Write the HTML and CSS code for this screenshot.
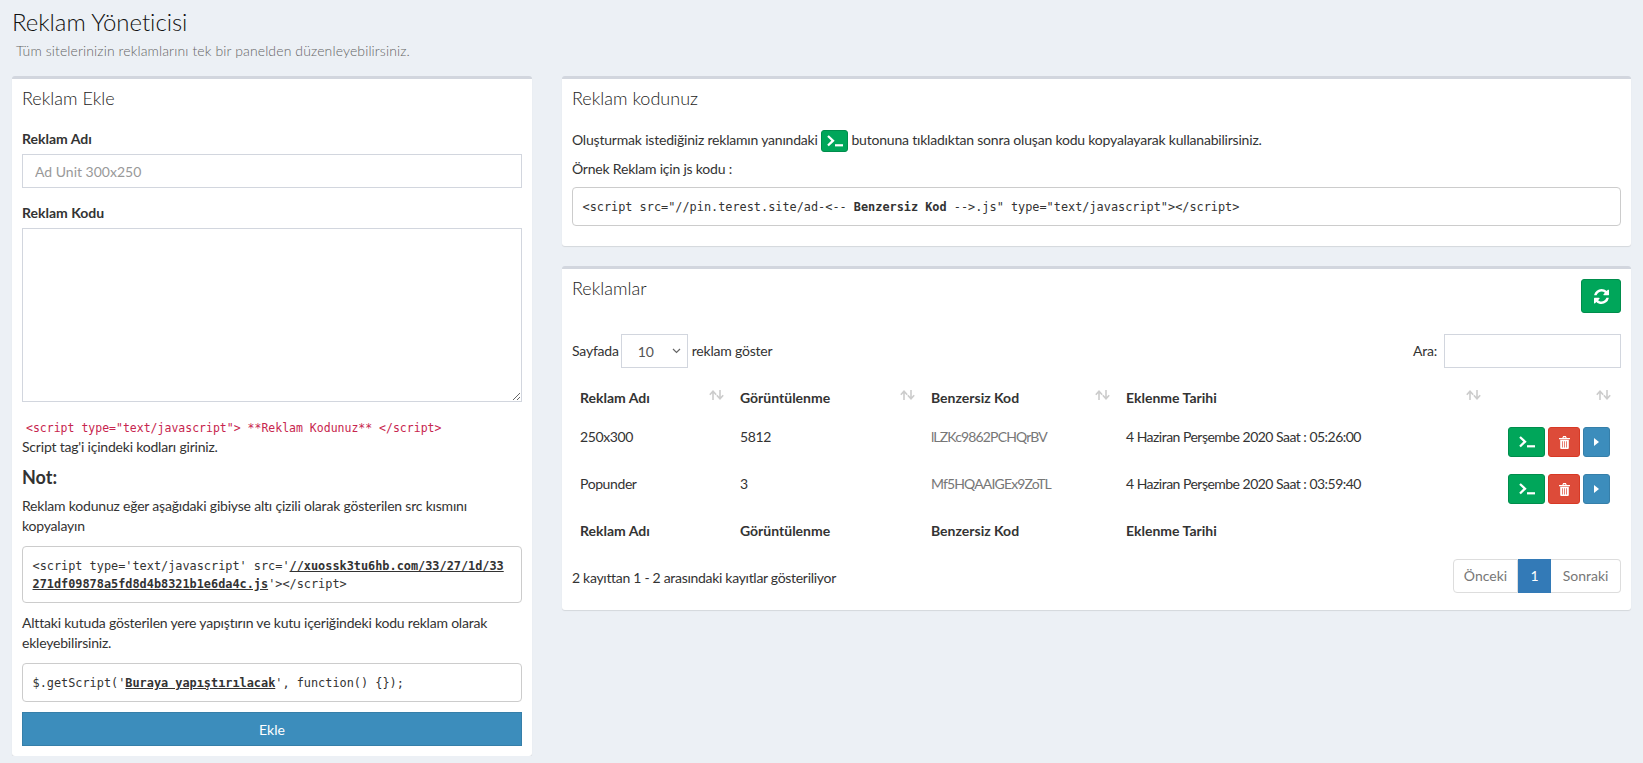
FILE: index.html
```html
<!DOCTYPE html>
<html lang="tr">
<head>
  <meta charset="UTF-8" />
  <meta name="viewport" content="width=device-width, initial-scale=1.0"/>
  <title>Reklam Yöneticisi</title>
  <link rel="stylesheet" href="styles.css">
</head>
<body>

  <svg class="icon-defs" width="0" height="0">
    <symbol id="i-term" viewBox="0 0 16 12">
      <path d="M1 1 6 5.700 1 10.500" fill="none" stroke="currentColor" stroke-width="2.300"/>
      <rect x="8" y="9.200" width="8" height="2.200" fill="currentColor"/>
    </symbol>
    <symbol id="i-trash" viewBox="0 0 11 13">
      <path d="M0 2h11v1.300H0zM3.300 2l.8-2h2.800l.8 2H6.500l-.3-.8H4.800L4.500 2z" fill="currentColor"/>
      <path d="M1.200 3.800h8.600V12a1 1 0 0 1-1 1H2.200a1 1 0 0 1-1-1zM3 5.200v6.300h.7V5.200zm2.150 0v6.300h.7V5.200zm2.150 0v6.300H8V5.200z" fill="currentColor" fill-rule="evenodd"/>
    </symbol>
    <symbol id="i-sort" viewBox="0 0 15 10">
      <path d="M4 10V2M.8 4.800 4 1.200l3.200 3.600" fill="none" stroke="currentColor" stroke-width="1.600"/>
      <path d="M11 0v8M7.800 5.200 11 8.800l3.200-3.600" fill="none" stroke="currentColor" stroke-width="1.600"/>
    </symbol>
  </svg>

  <header class="page-head">
    <h1>Reklam Yöneticisi</h1>
    <p class="subtitle">Tüm sitelerinizin reklamlarını tek bir panelden düzenleyebilirsiniz.</p>
  </header>

  <main class="content">
    <section class="box box-add">
      <h3 class="box-title">Reklam Ekle</h3>
      <form class="add-form">
        <label for="adName">Reklam Adı</label>
        <input type="text" id="adName" class="field" placeholder="Ad Unit 300x250">
        <label for="adCode" class="label-code">Reklam Kodu</label>
        <textarea id="adCode" class="field field-area"></textarea>
        <code class="hint-code">&lt;script type="text/javascript"&gt; **Reklam Kodunuz** &lt;/script&gt;</code>
        <p class="line">Script tag'i içindeki kodları giriniz.</p>
        <h4>Not:</h4>
        <p class="line">Reklam kodunuz eğer aşağıdaki gibiyse altı çizili olarak gösterilen src kısmını kopyalayın</p>
        <pre class="code-box">&lt;script type='text/javascript' src='<u>//xuossk3tu6hb.com/33/27/1d/33</u>
<u>271df09878a5fd8d4b8321b1e6da4c.js</u>'&gt;&lt;/script&gt;</pre>
        <p class="line">Alttaki kutuda gösterilen yere yapıştırın ve kutu içeriğindeki kodu reklam olarak ekleyebilirsiniz.</p>
        <pre class="code-box">$.getScript('<u>Buraya yapıştırılacak</u>', function() {});</pre>
        <button type="button" class="btn-submit">Ekle</button>
      </form>
    </section>

    <div class="right-col">
      <section class="box box-code">
        <h3 class="box-title">Reklam kodunuz</h3>
        <div class="code-body">
          <p class="line">Oluşturmak istediğiniz reklamın yanındaki <span class="btn btn-green btn-inline"><svg class="ic-term"><use href="#i-term"/></svg></span> butonuna tıkladıktan sonra oluşan kodu kopyalayarak kullanabilirsiniz.</p>
          <p class="line line-sample">Örnek Reklam için js kodu :</p>
          <pre class="code-box">&lt;script src="//pin.terest.site/ad-&lt;-- <b>Benzersiz Kod</b> --&gt;.js" type="text/javascript"&gt;&lt;/script&gt;</pre>
        </div>
      </section>

      <section class="box box-list">
        <div class="list-head">
          <h3 class="box-title">Reklamlar</h3>
          <button type="button" class="btn btn-green btn-refresh">
            <svg viewBox="0 0 1536 1536" class="ic-refresh"><path fill="currentColor" d="M1511 928q0 5-1 7-64 268-268 434.500t-478 166.500q-146 0-282.500-55t-243.500-157l-129 129q-19 19-45 19t-45-19-19-45v-448q0-26 19-45t45-19h448q26 0 45 19t19 45-19 45l-137 137q71 66 161 102t187 36q134 0 250-65t186-179q11-17 53-117 8-23 30-23h192q13 0 22.500 9.500t9.500 22.500zm25-800v448q0 26-19 45t-45 19h-448q-26 0-45-19t-19-45 19-45l138-138q-148-137-349-137-134 0-250 65t-186 179q-11 17-53 117-8 23-30 23h-199q-13 0-22.500-9.500t-9.500-22.500v-7q65-268 270-434.500t480-166.500q146 0 284 55.500t245 156.500l130-129q19-19 45-19t45 19 19 45z"/></svg>
          </button>
        </div>

        <div class="table-tools">
          <div class="tool-left">
            <span>Sayfada</span>
            <select class="page-size"><option>10</option><option>25</option><option>50</option></select>
            <span>reklam göster</span>
          </div>
          <div class="tool-right">
            <span>Ara:</span>
            <input type="search" class="field search">
          </div>
        </div>

        <table class="ads">
          <colgroup>
            <col class="c-name"><col class="c-views"><col class="c-code"><col class="c-date"><col class="c-act">
          </colgroup>
          <thead>
            <tr>
              <th>Reklam Adı<svg class="ic-sort"><use href="#i-sort"/></svg></th>
              <th>Görüntülenme<svg class="ic-sort"><use href="#i-sort"/></svg></th>
              <th>Benzersiz Kod<svg class="ic-sort"><use href="#i-sort"/></svg></th>
              <th>Eklenme Tarihi<svg class="ic-sort"><use href="#i-sort"/></svg></th>
              <th><svg class="ic-sort"><use href="#i-sort"/></svg></th>
            </tr>
          </thead>
          <tbody>
            <tr>
              <td>250x300</td>
              <td>5812</td>
              <td class="muted">lLZKc9862PCHQrBV</td>
              <td class="date">4 Haziran Perşembe 2020 Saat : 05:26:00</td>
              <td class="actions">
                <span class="btn btn-green btn-act1"><svg class="ic-term"><use href="#i-term"/></svg></span>
                <span class="btn btn-red btn-act2"><svg class="ic-trash"><use href="#i-trash"/></svg></span>
                <span class="btn btn-blue btn-act3"><i class="caret"></i></span>
              </td>
            </tr>
            <tr>
              <td>Popunder</td>
              <td>3</td>
              <td class="muted">Mf5HQAAIGEx9ZoTL</td>
              <td class="date">4 Haziran Perşembe 2020 Saat : 03:59:40</td>
              <td class="actions">
                <span class="btn btn-green btn-act1"><svg class="ic-term"><use href="#i-term"/></svg></span>
                <span class="btn btn-red btn-act2"><svg class="ic-trash"><use href="#i-trash"/></svg></span>
                <span class="btn btn-blue btn-act3"><i class="caret"></i></span>
              </td>
            </tr>
          </tbody>
          <tfoot>
            <tr>
              <th>Reklam Adı</th>
              <th>Görüntülenme</th>
              <th>Benzersiz Kod</th>
              <th>Eklenme Tarihi</th>
              <th></th>
            </tr>
          </tfoot>
        </table>

        <div class="table-foot">
          <span class="info">2 kayıttan 1 - 2 arasındaki kayıtlar gösteriliyor</span>
          <div class="pager">
            <a class="pg pg-prev">Önceki</a>
            <a class="pg pg-on">1</a>
            <a class="pg pg-next">Sonraki</a>
          </div>
        </div>
      </section>
    </div>
  </main>

</body>
</html>
```

FILE: styles.css
```css
* {
  box-sizing: border-box;
}

body {
  margin: 0;
  background: #ecf0f5;
  color: #333;
  font-family: Lato, "Noto Sans", sans-serif;
  font-size: 14px;
  letter-spacing: -0.2px;
  line-height: 20px;
}

.icon-defs {
  position: absolute;
}

.page-head {
  height: 76px;
  padding: 8px 0 0 12px;
}

.page-head h1 {
  margin: 0;
  color: #111;
  font-size: 24px;
  font-weight: 300;
  letter-spacing: -0.05px;
  line-height: 28px;
}

.subtitle {
  margin: 5px 0 0 4px;
  color: #666;
  font-weight: 300;
  letter-spacing: 0.12px;
}

.content {
  display: grid;
  grid-template-columns: 520px 1069px;
  gap: 30px;
  padding-left: 12px;
  align-items: start;
}

.right-col {
  display: flex;
  flex-direction: column;
  gap: 20px;
}

.box {
  background: #fff;
  border-top: 3px solid #d2d6de;
  border-radius: 3px;
  box-shadow: 0 1px 1px rgba(0,0,0,0.1);
  padding: 9px 10px 10px;
}

.box-title {
  margin: 0;
  color: #222;
  font-size: 18px;
  font-weight: 300;
  letter-spacing: 0;
  line-height: 20px;
}

.box-add {
  height: 680px;
}

.add-form {
  margin-top: 21px;
}

.add-form label {
  display: block;
  margin-bottom: 5px;
  font-weight: 700;
  letter-spacing: 0;
}

.add-form .label-code {
  margin-top: 15px;
}

.field {
  display: block;
  width: 100%;
  height: 34px;
  padding: 6px 12px;
  border: 1px solid #d2d6de;
  border-radius: 0;
  background: #fff;
  color: #555;
  font-family: inherit;
  font-size: 14px;
  outline: none;
}

.field::placeholder {
  color: #999;
}

.field-area {
  height: 174px;
}

.hint-code {
  display: block;
  margin-top: 16px;
  padding-left: 4px;
  color: #c7254e;
  font-family: "DejaVu Sans Mono", monospace;
  font-size: 11.5px;
  letter-spacing: 0;
  line-height: 20px;
}

.line {
  margin: 0;
}

.hint-code + .line {
  margin-top: -1px;
}

.add-form h4 {
  margin: 10px 0 9px;
  font-size: 18px;
  font-weight: 700;
  letter-spacing: 0;
  line-height: 20px;
}

.code-box {
  margin: 10px 0;
  padding: 9.5px;
  border: 1px solid #ccc;
  border-radius: 4px;
  background: #fff;
  color: #333;
  font-family: "DejaVu Sans Mono", monospace;
  font-size: 11.87px;
  letter-spacing: 0;
  line-height: 18px;
}

.code-box u {
  font-weight: 700;
}

.btn-submit {
  display: block;
  width: 100%;
  height: 34px;
  border: 1px solid #367fa9;
  background: #3c8dbc;
  color: #fff;
  font-family: inherit;
  font-size: 14px;
}

.box-code {
  height: 170px;
}

.code-body {
  margin-top: 22px;
}

.line-sample {
  margin-top: 9px;
}

.code-body .code-box {
  margin: 8px 0 0;
}

.btn {
  display: inline-flex;
  align-items: center;
  justify-content: center;
  border-radius: 3px;
  color: #fff;
  vertical-align: top;
}

.btn-green {
  background: #00a65a;
  border: 1px solid #008d4c;
}

.btn-red {
  background: #dd4b39;
  border: 1px solid #d73925;
}

.btn-blue {
  background: #3c8dbc;
  border: 1px solid #367fa9;
}

.btn-inline {
  width: 27px;
  height: 22px;
  margin-bottom: -2px;
}

.ic-term {
  width: 16px;
  height: 12px;
}

.ic-trash {
  width: 11px;
  height: 13px;
}

.ic-refresh {
  width: 15px;
  height: 15px;
}

.ic-sort {
  float: right;
  width: 15px;
  height: 10px;
  margin-top: 2px;
  color: #ccc;
}

.ads th:last-child .ic-sort {
  margin-right: 2px;
}

.caret {
  width: 0;
  height: 0;
  border-left: 5px solid #fff;
  border-top: 4px solid transparent;
  border-bottom: 4px solid transparent;
}

.box-list {
  height: 344px;
}

.list-head {
  display: flex;
  justify-content: space-between;
  align-items: flex-start;
}

.btn-refresh {
  width: 40px;
  height: 34px;
  margin-top: 1px;
  padding: 0;
}

.table-tools {
  display: flex;
  justify-content: space-between;
  align-items: center;
  margin-top: 21px;
}

.tool-left,
.tool-right {
  display: flex;
  align-items: center;
}

.page-size {
  width: 67px;
  height: 34px;
  margin: 0 4px 0 2px;
  padding: 0 16px;
  border: 1px solid #d2d6de;
  border-radius: 0;
  background: #fff url("data:image/svg+xml,%3Csvg xmlns='http://www.w3.org/2000/svg' width='9' height='6'%3E%3Cpath d='M1 1l3.500 3.500L8 1' fill='none' stroke='%23666' stroke-width='1.200'/%3E%3C/svg%3E") no-repeat right 6px center;
  color: #555;
  font-family: inherit;
  font-size: 14px;
  appearance: none;
}

.search {
  width: 177px;
  margin-left: 7px;
}

.ads {
  width: 1049px;
  margin-top: 12px;
  border-collapse: collapse;
  table-layout: fixed;
}

.c-name { width: 160px; }
.c-views { width: 191px; }
.c-code { width: 195px; }
.c-date { width: 371px; }
.c-act { width: 132px; }

.ads th {
  padding: 8px;
  font-weight: 700;
  letter-spacing: 0;
  text-align: left;
  vertical-align: top;
}

.ads thead th {
  padding-bottom: 11px;
}

.ads td {
  height: 47px;
  padding: 8px;
  letter-spacing: -0.4px;
  vertical-align: top;
}

.ads td.muted {
  color: #777;
  letter-spacing: -0.85px;
}

.ads td.date {
  letter-spacing: -0.52px;
}

.ads td.actions {
  padding-right: 11px;
  font-size: 0;
  text-align: right;
}

.actions .btn {
  height: 30px;
  margin-left: 3px;
}

.btn-act1 { width: 37px; }
.btn-act2 { width: 32px; }
.btn-act3 { width: 27px; }

.table-foot {
  display: flex;
  justify-content: space-between;
  align-items: center;
  margin-top: 10px;
}

.info {
  padding-top: 3px;
  letter-spacing: -0.3px;
}

.pager {
  display: flex;
  height: 34px;
  letter-spacing: 0;
  line-height: 32px;
}

.pg {
  border: 1px solid #ddd;
  color: #777;
  text-align: center;
}

.pg-prev {
  width: 65px;
  border-radius: 4px 0 0 4px;
}

.pg-on {
  width: 33px;
  border-color: #337ab7;
  background: #337ab7;
  color: #fff;
}

.pg-next {
  width: 70px;
  border-left: 0;
  border-radius: 0 4px 4px 0;
}
```
